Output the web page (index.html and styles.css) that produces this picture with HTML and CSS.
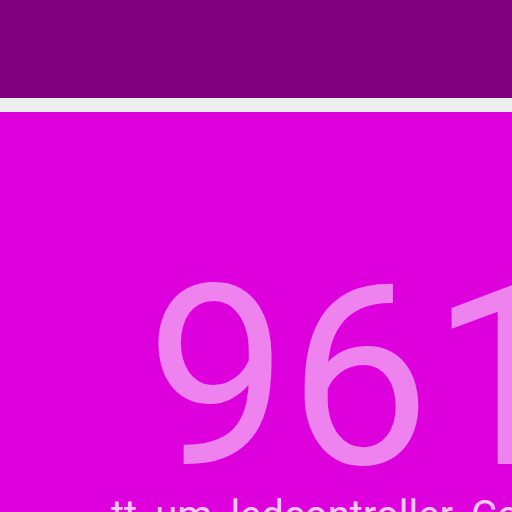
FILE: index.html
```html
<!DOCTYPE html>
<html>
<head>
<meta charset="utf-8">
<link rel="stylesheet" href="styles.css">
</head>
<body>
<header class="topbar"></header>
<main class="card">
  <div class="count">961</div>
  <div class="label">tt_um_ledcontroller_Combined</div>
</main>
</body>
</html>
```
FILE: styles.css
```css
html, body { margin: 0; padding: 0; }
body {
  background: #eeeeee;
  width: 512px;
  height: 512px;
  overflow: hidden;
  font-family: Roboto, sans-serif;
}
.topbar {
  height: 98px;
  background: #800080;
  margin-bottom: 14px;
}
.card {
  background: #dd00dd;
  height: 400px;
  padding-top: 139px;
  box-sizing: border-box;
  white-space: nowrap;
}
.count {
  font-size: 253px;
  line-height: 253px;
  color: #ee82ee;
  padding-left: 146px;
}
.label {
  font-size: 40px;
  line-height: 40px;
  margin-top: -8px;
  color: rgba(255, 255, 255, 0.8);
  padding-left: 111px;
}
```
